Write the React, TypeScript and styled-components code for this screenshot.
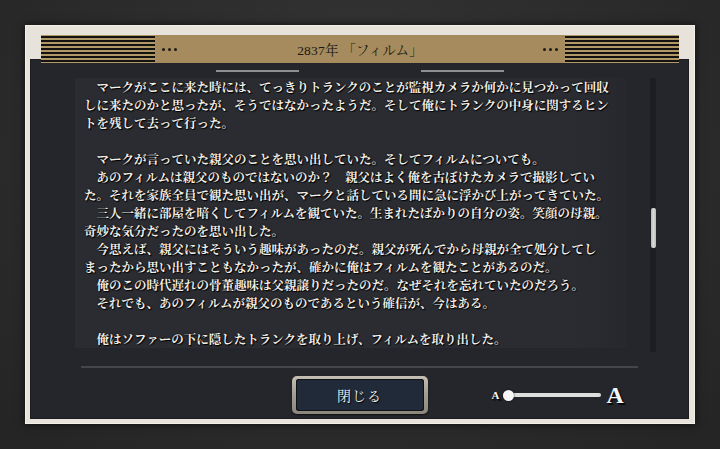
import React from "react";
import styled, { createGlobalStyle } from "styled-components";

const GlobalStyle = createGlobalStyle`
  html, body { margin: 0; padding: 0; }
  body { background: #2a2a2a; }
`;

const serifStack = `"Liberation Serif", "Noto Serif CJK JP", "Noto Sans CJK JP", serif`;
const jpStack = `"Noto Serif CJK JP", "Noto Sans CJK JP", sans-serif`;

const Page = styled.div`
  width: 720px;
  height: 449px;
  box-sizing: border-box;
  padding: 25px 25px 0 25px;
  background: radial-gradient(ellipse at 50% 35%, #3a3a3a 0%, #2e2e2e 45%, #242424 100%);
  overflow: hidden;
`;

const Frame = styled.div`
  width: 670px;
  height: 399px;
  box-sizing: border-box;
  padding: 10px 6px 5px 5px;
  background: #e7e3da;
  box-shadow: 0 0 8px rgba(0, 0, 0, 0.7), inset 0 0 0 1px #f3f0ea;
  display: flex;
  flex-direction: column;
`;

const Header = styled.div`
  position: relative;
  z-index: 1;
  height: 28px;
  margin: 0 10px 0 11px;
  background: #a58b5d;
  display: grid;
  grid-template-columns: 114px 30px 1fr 30px 114px;
  align-items: center;
`;

const Stripes = styled.div`
  height: 28px;
  background: repeating-linear-gradient(
    to bottom,
    #b09867 0px,
    #b09867 1px,
    #141210 1px,
    #141210 2.6px,
    #b09867 2.6px,
    #b09867 4px
  );
`;

const Dots = styled.div<{ $side: "left" | "right" }>`
  display: flex;
  gap: 3px;
  justify-content: ${(p) => (p.$side === "left" ? "flex-start" : "flex-end")};
  padding: ${(p) => (p.$side === "left" ? "0 0 0 7px" : "0 7px 0 0")};
`;

const Dot = styled.span`
  width: 3px;
  height: 3px;
  border-radius: 50%;
  background: #1c1a16;
`;

const Title = styled.div`
  text-align: center;
  font-family: ${serifStack};
  font-size: 13.5px;
  color: #1b1813;
  letter-spacing: 0.2px;
`;

const Panel = styled.div`
  flex: 1;
  margin-top: -4px;
  background: #25262b;
  box-shadow: inset 0 0 0 1px #1c1d21;
  display: flex;
  flex-direction: column;
  padding-top: 11px;
`;

const Ornaments = styled.div`
  display: flex;
  justify-content: center;
  gap: 122px;
  height: 2px;
`;

const OrnamentLine = styled.div`
  width: 83px;
  height: 2px;
  background: #8f8f92;
`;

const Body = styled.div`
  margin-top: 6px;
  height: 274px;
  display: flex;
  padding-left: 45px;
`;

const TextBlock = styled.div`
  width: 552px;
  height: 270px;
  box-sizing: border-box;
  padding: 0 0 0 9px;
  background: linear-gradient(to right, #2b2c31 0%, #2b2c31 90%, #27282d 100%);
  overflow: hidden;
`;

const Line = styled.div`
  height: 18px;
  line-height: 18px;
  white-space: pre;
  font-family: ${jpStack};
  font-weight: 700;
  font-size: 12.5px;
  color: #f2efe8;
  text-shadow: 1px 1px 1px #000, 0 0 2px #000;
`;

const Track = styled.div`
  margin-left: 23px;
  width: 6px;
  height: 274px;
  background: #1d1e22;
  display: flex;
  flex-direction: column;
  align-items: center;
`;

const Thumb = styled.div`
  margin-top: 130px;
  width: 5px;
  height: 40px;
  border-radius: 2px;
  background: linear-gradient(to right, #b9b9b9, #d8d8d8, #b9b9b9);
`;

const Separator = styled.div`
  margin: 14px 0 0 51px;
  width: 557px;
  height: 2px;
  background: #45464b;
`;

const Footer = styled.div`
  margin-top: 8px;
  display: grid;
  grid-template-columns: 1fr 136px 1fr;
  align-items: center;
  height: 38px;
`;

const CloseButton = styled.button`
  grid-column: 2;
  width: 136px;
  height: 38px;
  padding: 3px 4px;
  border: none;
  border-radius: 5px;
  background: linear-gradient(to bottom, #c4bfb2, #a29d91 50%, #8c877c);
  box-shadow: 0 1px 2px rgba(0, 0, 0, 0.6);
  cursor: pointer;
`;

const ButtonFace = styled.span`
  display: flex;
  align-items: center;
  justify-content: center;
  height: 100%;
  border-radius: 3px;
  background: #212a39;
  box-shadow: inset 0 0 0 1px #0f1218;
  font-family: ${jpStack};
  font-size: 14px;
  color: #f3f1ec;
  text-shadow: 1px 1px 1px #000;
  letter-spacing: 1px;
`;

const Slider = styled.div`
  grid-column: 3;
  margin-left: 64px;
  display: flex;
  align-items: center;
`;

const LetterA = styled.span<{ $size: number }>`
  font-family: ${serifStack};
  font-weight: 700;
  font-size: ${(p) => p.$size}px;
  line-height: 1;
  color: #f5f5f5;
  text-shadow: 1px 1px 1px #000, 2px 2px 1px rgba(0, 0, 0, 0.7);
`;

const SliderTrack = styled.div`
  position: relative;
  margin: 0 5px 0 4px;
  width: 98px;
  height: 4px;
  border-radius: 2px;
  background: #dedede;
  display: flex;
  align-items: center;
`;

const Knob = styled.div`
  width: 11px;
  height: 11px;
  border-radius: 50%;
  background: #f7f7f7;
  box-shadow: 0 0 2px rgba(0, 0, 0, 0.8);
`;

const lines: string[] = [
  "　マークがここに来た時には、てっきりトランクのことが監視カメラか何かに見つかって回収",
  "しに来たのかと思ったが、そうではなかったようだ。そして俺にトランクの中身に関するヒン",
  "トを残して去って行った。",
  " ",
  "　マークが言っていた親父のことを思い出していた。そしてフィルムについても。",
  "　あのフィルムは親父のものではないのか？　親父はよく俺を古ぼけたカメラで撮影してい",
  "た。それを家族全員で観た思い出が、マークと話している間に急に浮かび上がってきていた。",
  "　三人一緒に部屋を暗くしてフィルムを観ていた。生まれたばかりの自分の姿。笑顔の母親。",
  "奇妙な気分だったのを思い出した。",
  "　今思えば、親父にはそういう趣味があったのだ。親父が死んでから母親が全て処分してし",
  "まったから思い出すこともなかったが、確かに俺はフィルムを観たことがあるのだ。",
  "　俺のこの時代遅れの骨董趣味は父親譲りだったのだ。なぜそれを忘れていたのだろう。",
  "　それでも、あのフィルムが親父のものであるという確信が、今はある。",
  " ",
  "　俺はソファーの下に隠したトランクを取り上げ、フィルムを取り出した。",
];

export default function App() {
  return (
    <>
      <GlobalStyle />
      <Page>
        <Frame>
          <Header>
            <Stripes />
            <Dots $side="left">
              <Dot />
              <Dot />
              <Dot />
            </Dots>
            <Title>2837年 「フィルム」</Title>
            <Dots $side="right">
              <Dot />
              <Dot />
              <Dot />
            </Dots>
            <Stripes />
          </Header>
          <Panel>
            <Ornaments>
              <OrnamentLine />
              <OrnamentLine />
            </Ornaments>
            <Body>
              <TextBlock>
                {lines.map((l, i) => (
                  <Line key={i}>{l}</Line>
                ))}
              </TextBlock>
              <Track>
                <Thumb />
              </Track>
            </Body>
            <Separator />
            <Footer>
              <CloseButton>
                <ButtonFace>閉じる</ButtonFace>
              </CloseButton>
              <Slider>
                <LetterA $size={11}>A</LetterA>
                <SliderTrack>
                  <Knob />
                </SliderTrack>
                <LetterA $size={24}>A</LetterA>
              </Slider>
            </Footer>
          </Panel>
        </Frame>
      </Page>
    </>
  );
}
